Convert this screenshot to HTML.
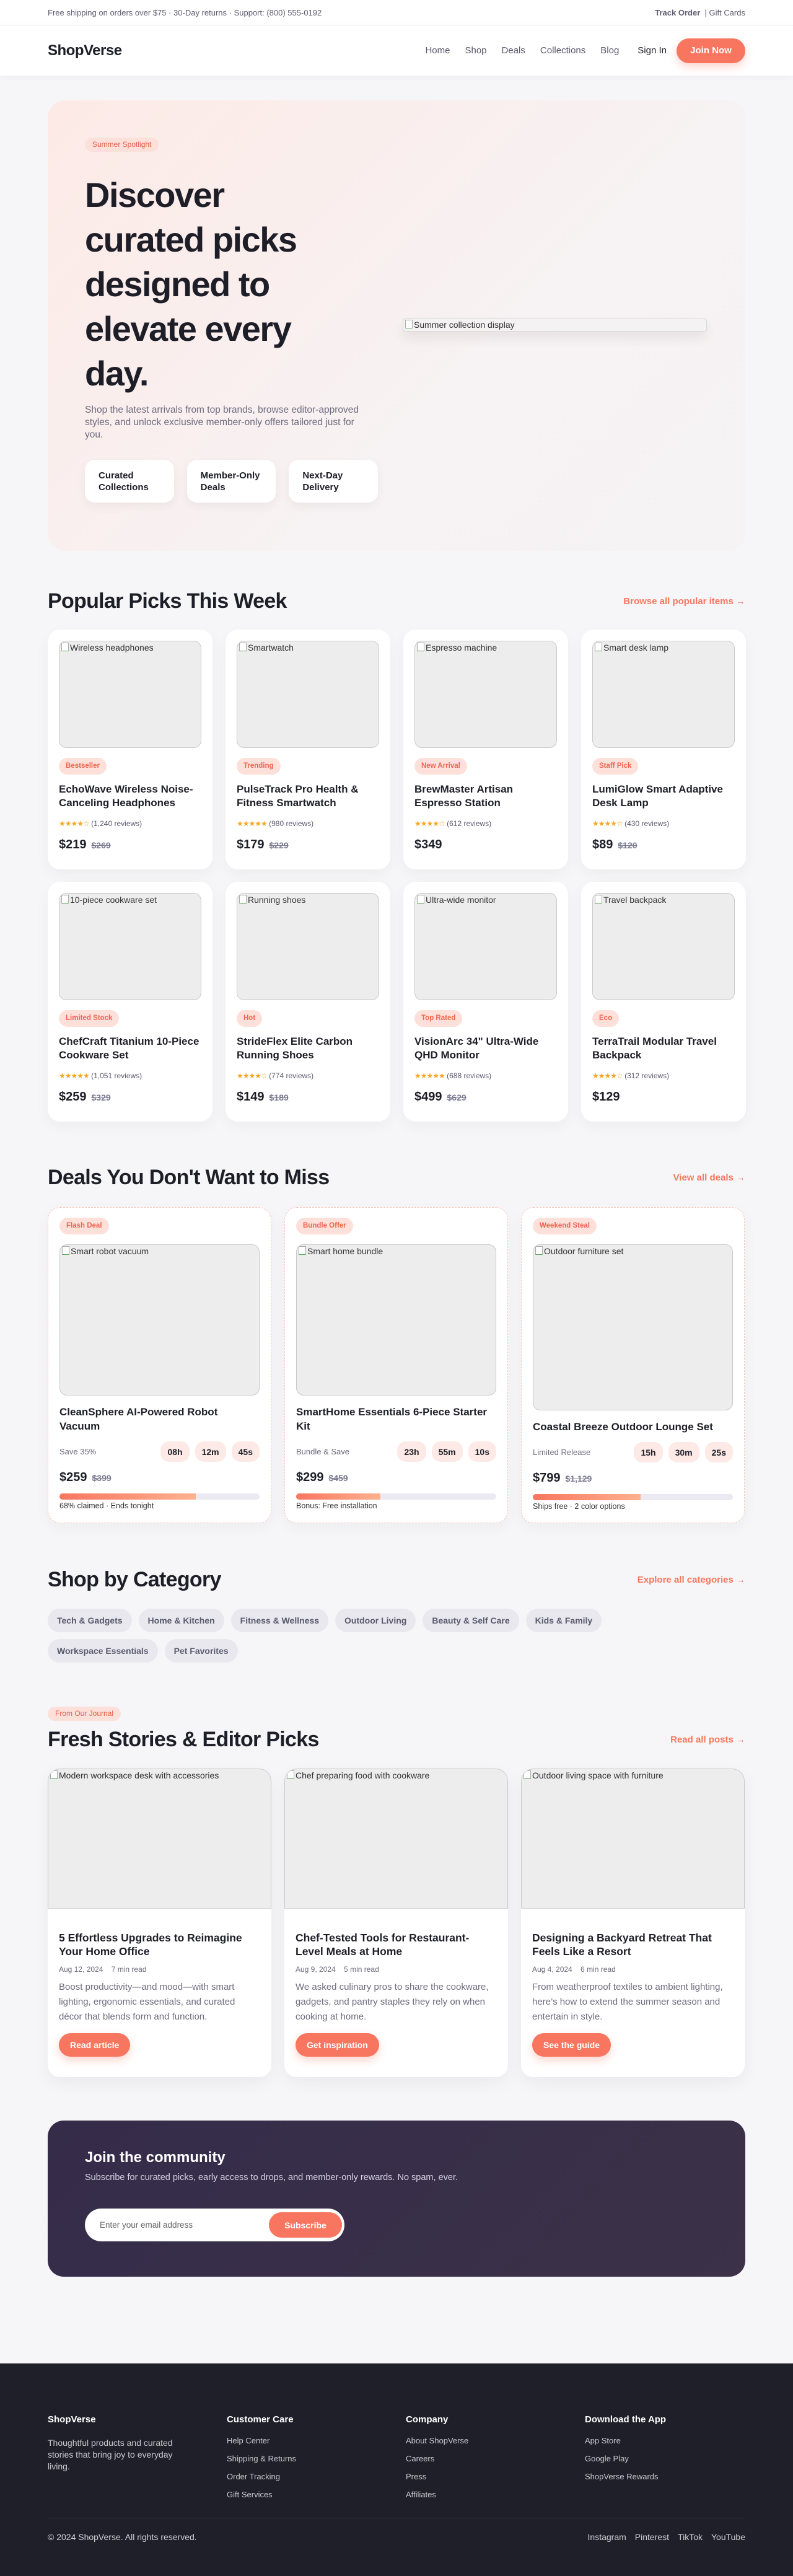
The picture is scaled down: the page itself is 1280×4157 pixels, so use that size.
<!DOCTYPE html>
<html><head><meta charset="utf-8"><style>
*{box-sizing:border-box;margin:0;padding:0}
body{width:1280px;background:#f6f6f8;font-family:"Liberation Sans",Arial,sans-serif;color:#1e1e28}
.w{width:1126px;margin:0 auto}
.top{height:41px;background:#fff;border-bottom:1px solid #e4e4ea;font-size:13px;color:#5e5d70}
.top .w{display:flex;justify-content:space-between;align-items:center;height:40px}
.nav{height:81px;background:#fff;box-shadow:0 2px 10px rgba(0,0,0,.04)}
.nav .w{display:flex;align-items:center;height:81px}
.logo{font-size:24px;font-weight:700;letter-spacing:-.5px}
.links{margin-left:auto;display:flex;gap:24px;font-size:15px;color:#5b5a6e}
.signin{margin-left:30px;font-size:15px;color:#1e1e28}
.join{margin-left:16px;background:#f8765f;color:#fff;font-weight:700;font-size:15px;height:40px;width:111px;border-radius:20px;display:flex;align-items:center;justify-content:center;box-shadow:0 6px 14px rgba(248,118,95,.3)}
.hero{margin:40px auto 0;height:727px;border-radius:28px;background:linear-gradient(135deg,#fdeae6,#f7f2f3 60%,#f6f3f4);padding:60px;display:flex;gap:40px}
.badge{display:inline-block;background:#fde0da;color:#e4604a;font-size:12px;border-radius:12px;padding:0 12px;height:23px;line-height:23px}
.hl{width:473px}
.hl h1{font-size:56px;line-height:72px;font-weight:700;letter-spacing:-1.5px;margin-top:34px;white-space:nowrap}
.hl p{font-size:15.5px;line-height:20px;color:#6d6b7e;margin-top:13px;width:450px}
.hb{display:flex;gap:21px;margin-top:30px}
.hb div{background:#fff;border-radius:16px;height:69px;width:147px;padding:0 22px;display:flex;align-items:center;font-size:15px;font-weight:700;line-height:19px;box-shadow:0 6px 16px rgba(0,0,0,.05)}
.img{background:#ededed;border:1px solid #c9c9c9;border-radius:12px;font-size:14px;color:#333;padding:2px 3px;overflow:hidden;white-space:nowrap}
.img:before{content:"";display:inline-block;width:10px;height:12px;border:1px solid #aaa;border-bottom-color:#5a5;margin-right:2px;vertical-align:-1px;background:#fff}
.himg{margin-top:292px;width:491px;height:21px;background:#f4f2f2;border:1px solid #d8d8d8;border-radius:4px;font-size:14px;padding:1px 3px;box-shadow:0 10px 20px rgba(0,0,0,.08)}
.sh{display:flex;justify-content:space-between;align-items:center;height:40px}
.sh h2{font-size:34px;font-weight:700;letter-spacing:-.7px}
.sh a{color:#f8765f;font-size:15px;font-weight:700;text-decoration:none}
.grid4{display:grid;grid-template-columns:repeat(4,266px);gap:20px 21px;margin-top:26px}
.pc{background:#fff;border-radius:20px;height:387px;padding:18px;box-shadow:0 8px 24px rgba(0,0,0,.04)}
.pc .img{height:173px}
.tag{display:inline-block;background:#fde0da;color:#f0654e;font-size:11.5px;font-weight:700;border-radius:14px;height:27px;line-height:27px;padding:0 11px;margin-top:16px}
.pc h3{font-size:17px;line-height:22px;font-weight:700;margin-top:13px;height:44px}
.st{font-size:12px;color:#5b5a6e;margin-top:15px}
.st b{color:#f5a623;font-weight:400;letter-spacing:-1px}
.pr{margin-top:16px;font-size:20px;font-weight:700}
.pr s{font-size:14px;color:#7a7990;margin-left:8px}
.grid3{display:grid;grid-template-columns:repeat(3,361px);gap:21px;margin-top:28px}
.dc{background:#fff;border:1px dashed #f6c6bd;border-radius:20px;height:510px;padding:16px 18px;box-shadow:0 8px 24px rgba(0,0,0,.04)}
.dc .tag{margin-top:0}
.dc .img{height:244px;margin-top:16px}
.dc h3{font-size:17px;line-height:23px;font-weight:700;margin-top:15px;height:46px}
.tr{display:flex;align-items:center;margin-top:13px;font-size:13px;color:#6d6b7e}
.tr span{margin-left:auto}
.tr i{font-style:normal;background:#fdeae6;color:#1e1e28;font-weight:700;font-size:14px;height:33px;padding:0 11px;border-radius:14px;display:inline-flex;align-items:center;margin-left:9px}
.dc .pr{margin-top:14px}
.bar{height:10px;border-radius:5px;background:#ebe9f1;margin-top:14px;overflow:hidden}
.bar div{height:100%;background:linear-gradient(90deg,#f8765f,#fdb18e)}
.cap{font-size:12.5px;margin-top:3px;color:#333}
.chips{display:flex;flex-wrap:wrap;gap:11px 11px;margin-top:27px;width:1000px}
.chips span{background:#e9e8ef;color:#5b5a6e;font-size:14px;font-weight:700;height:38px;line-height:38px;padding:0 15px;border-radius:19px}
.jc{background:#fff;border-radius:20px;height:498px;overflow:hidden;box-shadow:0 10px 28px rgba(0,0,0,.05)}
.jc .img{height:226px;border-radius:20px 20px 0 0}
.jb{padding:36px 18px 0}
.jb h3{font-size:17.5px;line-height:22px;font-weight:700}
.meta{font-size:12px;color:#6d6b7e;margin-top:11px}
.jb p{font-size:15px;line-height:24px;color:#6d6b7e;margin-top:10px}
.btn{display:inline-block;background:#f8765f;color:#fff;font-weight:700;font-size:14px;height:38px;line-height:38px;padding:0 18px;border-radius:19px;margin-top:14px;box-shadow:0 6px 14px rgba(248,118,95,.3)}
.news{margin:70px auto 0;height:252px;border-radius:26px;background:linear-gradient(135deg,#352c4a,#3b3148);padding:46px 60px}
.news h2{color:#fff;font-size:24px;font-weight:700}
.news p{color:#d8d4e4;font-size:14.5px;margin-top:10px}
.inp{margin-top:42px;width:419px;height:53px;background:#fff;border-radius:27px;display:flex;align-items:center;padding:0 4px 0 24px;font-size:13.5px;color:#666}
.inp span{margin-left:auto;background:#f8765f;color:#fff;font-weight:700;font-size:14px;height:41px;width:118px;border-radius:21px;display:flex;align-items:center;justify-content:center}
footer{margin-top:140px;background:#1f1f29;height:343px;padding-top:82px}
.fc{display:grid;grid-template-columns:289px 289px 289px 259px}
.fc h4{color:#fff;font-size:15px;font-weight:700}
.fc p{color:#c8c8d0;font-size:14px;line-height:19px;margin-top:20px;width:240px}
.fc ul{list-style:none;margin-top:18px}
.fc li{color:#c8c8d0;font-size:13px;height:29px}
.fb{border-top:1px solid #34343f;margin-top:16px;padding-top:22px;display:flex;justify-content:space-between;color:#d0d0d8;font-size:14px}
.fb div span{margin-left:14px}
</style></head><body>
<div class="top"><div class="w"><span>Free shipping on orders over $75 · 30-Day returns · Support: (800) 555-0192</span><span><b>Track Order</b> &nbsp;| Gift Cards</span></div></div>
<div class="nav"><div class="w"><div class="logo">ShopVerse</div><div class="links"><span>Home</span><span>Shop</span><span>Deals</span><span>Collections</span><span>Blog</span></div><div class="signin">Sign In</div><div class="join">Join Now</div></div></div>
<div class="w hero"><div class="hl"><span class="badge">Summer Spotlight</span><h1>Discover<br>curated picks<br>designed to<br>elevate every<br>day.</h1><p>Shop the latest arrivals from top brands, browse editor-approved styles, and unlock exclusive member-only offers tailored just for you.</p><div class="hb"><div>Curated<br>Collections</div><div>Member-Only<br>Deals</div><div>Next-Day<br>Delivery</div></div></div><div><div class="himg img" style="border-radius:4px">Summer collection display</div></div></div>

<div class="w" style="margin-top:61px"><div class="sh"><h2>Popular Picks This Week</h2><a>Browse all popular items →</a></div>
<div class="grid4">
<div class="pc"><div class="img">Wireless headphones</div><span class="tag">Bestseller</span><h3>EchoWave Wireless Noise-Canceling Headphones</h3><div class="st"><b>★★★★☆</b> (1,240 reviews)</div><div class="pr">$219<s>$269</s></div></div>
<div class="pc"><div class="img">Smartwatch</div><span class="tag">Trending</span><h3>PulseTrack Pro Health &amp; Fitness Smartwatch</h3><div class="st"><b>★★★★★</b> (980 reviews)</div><div class="pr">$179<s>$229</s></div></div>
<div class="pc"><div class="img">Espresso machine</div><span class="tag">New Arrival</span><h3>BrewMaster Artisan Espresso Station</h3><div class="st"><b>★★★★☆</b> (612 reviews)</div><div class="pr">$349</div></div>
<div class="pc"><div class="img">Smart desk lamp</div><span class="tag">Staff Pick</span><h3>LumiGlow Smart Adaptive Desk Lamp</h3><div class="st"><b>★★★★☆</b> (430 reviews)</div><div class="pr">$89<s>$120</s></div></div>
<div class="pc"><div class="img">10-piece cookware set</div><span class="tag">Limited Stock</span><h3>ChefCraft Titanium 10-Piece Cookware Set</h3><div class="st"><b>★★★★★</b> (1,051 reviews)</div><div class="pr">$259<s>$329</s></div></div>
<div class="pc"><div class="img">Running shoes</div><span class="tag">Hot</span><h3>StrideFlex Elite Carbon Running Shoes</h3><div class="st"><b>★★★★☆</b> (774 reviews)</div><div class="pr">$149<s>$189</s></div></div>
<div class="pc"><div class="img">Ultra-wide monitor</div><span class="tag">Top Rated</span><h3>VisionArc 34" Ultra-Wide QHD Monitor</h3><div class="st"><b>★★★★★</b> (688 reviews)</div><div class="pr">$499<s>$629</s></div></div>
<div class="pc"><div class="img">Travel backpack</div><span class="tag">Eco</span><h3>TerraTrail Modular Travel Backpack</h3><div class="st"><b>★★★★☆</b> (312 reviews)</div><div class="pr">$129</div></div>
</div></div>

<div class="w" style="margin-top:70px"><div class="sh"><h2>Deals You Don't Want to Miss</h2><a>View all deals →</a></div>
<div class="grid3">
<div class="dc"><span class="tag">Flash Deal</span><div class="img">Smart robot vacuum</div><h3>CleanSphere AI-Powered Robot Vacuum</h3><div class="tr">Save 35%<span></span><i>08h</i><i>12m</i><i>45s</i></div><div class="pr">$259<s>$399</s></div><div class="bar"><div style="width:68%"></div></div><div class="cap">68% claimed · Ends tonight</div></div>
<div class="dc"><span class="tag">Bundle Offer</span><div class="img">Smart home bundle</div><h3>SmartHome Essentials 6-Piece Starter Kit</h3><div class="tr">Bundle &amp; Save<span></span><i>23h</i><i>55m</i><i>10s</i></div><div class="pr">$299<s>$459</s></div><div class="bar"><div style="width:42%"></div></div><div class="cap">Bonus: Free installation</div></div>
<div class="dc"><span class="tag">Weekend Steal</span><div class="img" style="height:268px">Outdoor furniture set</div><h3 style="height:23px">Coastal Breeze Outdoor Lounge Set</h3><div class="tr">Limited Release<span></span><i>15h</i><i>30m</i><i>25s</i></div><div class="pr">$799<s>$1,129</s></div><div class="bar"><div style="width:54%"></div></div><div class="cap">Ships free · 2 color options</div></div>
</div></div>

<div class="w" style="margin-top:71px"><div class="sh"><h2>Shop by Category</h2><a>Explore all categories →</a></div>
<div class="chips"><span>Tech &amp; Gadgets</span><span>Home &amp; Kitchen</span><span>Fitness &amp; Wellness</span><span>Outdoor Living</span><span>Beauty &amp; Self Care</span><span>Kids &amp; Family</span><span>Workspace Essentials</span><span>Pet Favorites</span></div></div>

<div class="w" style="margin-top:71px"><span class="badge">From Our Journal</span><div class="sh" style="margin-top:10px"><h2>Fresh Stories &amp; Editor Picks</h2><a>Read all posts →</a></div>
<div class="grid3" style="margin-top:27px">
<div class="jc"><div class="img">Modern workspace desk with accessories</div><div class="jb"><h3>5 Effortless Upgrades to Reimagine Your Home Office</h3><div class="meta">Aug 12, 2024 &nbsp;&nbsp; 7 min read</div><p>Boost productivity—and mood—with smart lighting, ergonomic essentials, and curated décor that blends form and function.</p><span class="btn">Read article</span></div></div>
<div class="jc"><div class="img">Chef preparing food with cookware</div><div class="jb"><h3>Chef-Tested Tools for Restaurant-Level Meals at Home</h3><div class="meta">Aug 9, 2024 &nbsp;&nbsp; 5 min read</div><p>We asked culinary pros to share the cookware, gadgets, and pantry staples they rely on when cooking at home.</p><span class="btn">Get inspiration</span></div></div>
<div class="jc"><div class="img">Outdoor living space with furniture</div><div class="jb"><h3>Designing a Backyard Retreat That Feels Like a Resort</h3><div class="meta">Aug 4, 2024 &nbsp;&nbsp; 6 min read</div><p>From weatherproof textiles to ambient lighting, here’s how to extend the summer season and entertain in style.</p><span class="btn">See the guide</span></div></div>
</div></div>

<div class="w news"><h2>Join the community</h2><p>Subscribe for curated picks, early access to drops, and member-only rewards. No spam, ever.</p><div class="inp">Enter your email address<span>Subscribe</span></div></div>

<footer><div class="w"><div class="fc">
<div><h4>ShopVerse</h4><p>Thoughtful products and curated stories that bring joy to everyday living.</p></div>
<div><h4>Customer Care</h4><ul><li>Help Center</li><li>Shipping &amp; Returns</li><li>Order Tracking</li><li>Gift Services</li></ul></div>
<div><h4>Company</h4><ul><li>About ShopVerse</li><li>Careers</li><li>Press</li><li>Affiliates</li></ul></div>
<div><h4>Download the App</h4><ul><li>App Store</li><li>Google Play</li><li>ShopVerse Rewards</li></ul></div>
</div>
<div class="fb"><span>© 2024 ShopVerse. All rights reserved.</span><div><span>Instagram</span><span>Pinterest</span><span>TikTok</span><span>YouTube</span></div></div></div></footer>
</body></html>
